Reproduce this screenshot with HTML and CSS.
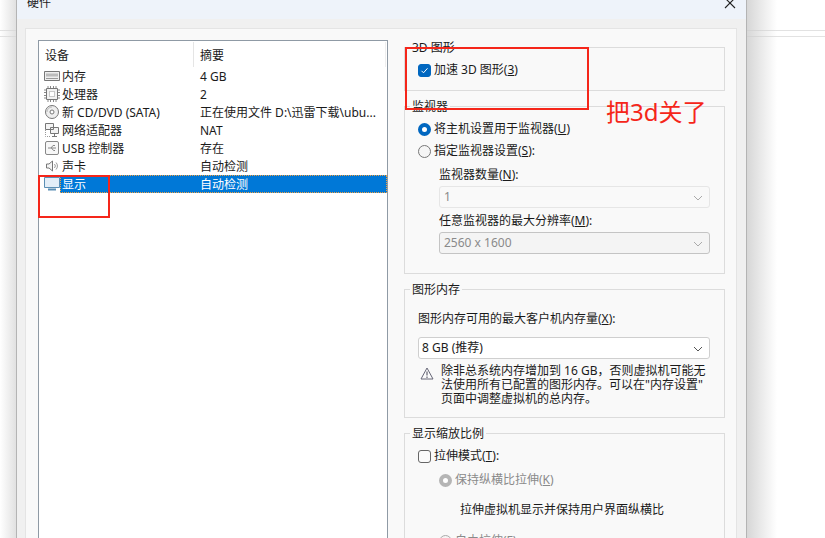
FILE: index.html
```html
<!DOCTYPE html>
<html lang="zh-CN">
<head>
<meta charset="utf-8">
<title>硬件</title>
<link rel="stylesheet" href="styles.css">
</head>
<body>
<div class="desktop">
  <div class="bg-line line-a"></div>
  <div class="bg-line line-b"></div>
  <div class="shade-left"></div>
  <div class="shade-right"></div>

  <section class="dialog">
    <header class="titlebar">
      <span class="title">硬件</span>
      <svg class="close" width="12" height="12" viewBox="0 0 12 12"><path d="M1 1l10 10M11 1L1 11" stroke="#222" stroke-width="1.1" fill="none"/></svg>
    </header>
    <div class="panel">
      <div class="devices">
        <div class="head">
          <span class="h-dev">设备</span>
          <span class="h-sum">摘要</span>
        </div>
        <div class="row">
          <svg class="ico" width="16" height="16" viewBox="0 0 16 16"><path d="M.5 3.500h15v9H.5z" fill="#eee" stroke="#777"/><path d="M2 5.500h12v3H2z" fill="#bbb"/><path d="M2 10.500h12" stroke="#999"/></svg>
          <span class="name">内存</span><span class="sum">4 GB</span>
        </div>
        <div class="row">
          <svg class="ico" width="16" height="16" viewBox="0 0 16 16"><path d="M2.500 2.500h11v11h-11z" fill="#f2f2f2" stroke="#777"/><path d="M5.500 5.500h5v5h-5z" fill="#fff" stroke="#999" stroke-dasharray="1 1"/><path d="M4 0v2M6.500 0v2M9.500 0v2M12 0v2M4 14v2M6.500 14v2M9.500 14v2M12 14v2M0 4h2M0 6.500h2M0 9.500h2M0 12h2M14 4h2M14 6.500h2M14 9.500h2M14 12h2" stroke="#888"/></svg>
          <span class="name">处理器</span><span class="sum">2</span>
        </div>
        <div class="row">
          <svg class="ico" width="16" height="16" viewBox="0 0 16 16"><circle cx="8" cy="8" r="6.500" fill="#eee" stroke="#777"/><circle cx="8" cy="8" r="2" fill="#fff" stroke="#777"/><path d="M8 3a5 5 0 0 0-5 5" stroke="#bbb" fill="none"/></svg>
          <span class="name">新 CD/DVD (SATA)</span><span class="sum">正在使用文件 D:\迅雷下载\ubu...</span>
        </div>
        <div class="row">
          <svg class="ico" width="16" height="16" viewBox="0 0 16 16"><path d="M1.500 1.500h8v6h-8zM6.500 5.500h8v6h-8z" fill="#f4f4f4" stroke="#777"/><path d="M10.500 11.500v3M8 14.500h5" stroke="#777"/><path d="M1.500 8v6.500h5" stroke="#999" stroke-dasharray="1 1" fill="none"/></svg>
          <span class="name">网络适配器</span><span class="sum">NAT</span>
        </div>
        <div class="row">
          <svg class="ico" width="16" height="16" viewBox="0 0 16 16"><rect x="1.500" y="1.500" width="13" height="13" rx="1.500" fill="#f7f7f7" stroke="#888"/><path d="M4 8h8M7 8l2-2.500h2M7.500 8l2 2.500h1.500" stroke="#888" fill="none"/></svg>
          <span class="name">USB 控制器</span><span class="sum">存在</span>
        </div>
        <div class="row">
          <svg class="ico" width="16" height="16" viewBox="0 0 16 16"><path d="M2.500 6v4h2.500l3.500 3V3L5 6z" fill="#f4f4f4" stroke="#777"/><path d="M10.500 6a3 3 0 0 1 0 4M12 4.500a5 5 0 0 1 0 7" stroke="#999" fill="none"/></svg>
          <span class="name">声卡</span><span class="sum">自动检测</span>
        </div>
        <div class="row selected">
          <svg class="ico" width="16" height="16" viewBox="0 0 16 16"><path d="M.5 1.500h15v10H.5z" fill="#e3eef8" stroke="#5b8fb5"/><path d="M4 13.500h8" stroke="#5b8fb5" stroke-width="2"/></svg>
          <span class="cell"><span class="name">显示</span><span class="sum">自动检测</span></span>
        </div>
      </div>

      <div class="settings">
        <fieldset class="group g-3d">
          <legend>3D 图形</legend>
          <label class="opt"><span class="check on"><svg width="9" height="9" viewBox="0 0 9 9"><path d="M1.500 4.800l2 2 4-4.500" stroke="#fff" fill="none"/></svg></span>加速 3D 图形(<u>3</u>)</label>
        </fieldset>

        <fieldset class="group g-mon">
          <legend>监视器</legend>
          <label class="opt"><span class="radio on"></span>将主机设置用于监视器(<u>U</u>)</label>
          <label class="opt opt-second"><span class="radio"></span>指定监视器设置(<u>S</u>):</label>
          <div class="sub">
            <div class="lbl">监视器数量(<u>N</u>):</div>
            <div class="select off flat">1<svg class="chev" width="10" height="6" viewBox="0 0 10 6"><path d="M1 1l4 4 4-4" stroke="#aaa" fill="none"/></svg></div>
            <div class="lbl lbl-res">任意监视器的最大分辨率(<u>M</u>):</div>
            <div class="select off">2560 x 1600<svg class="chev" width="10" height="6" viewBox="0 0 10 6"><path d="M1 1l4 4 4-4" stroke="#aaa" fill="none"/></svg></div>
          </div>
        </fieldset>

        <fieldset class="group g-mem">
          <legend>图形内存</legend>
          <div class="lbl">图形内存可用的最大客户机内存量(<u>X</u>):</div>
          <div class="select live">8 GB (推荐)<svg class="chev" width="10" height="6" viewBox="0 0 10 6"><path d="M1 1l4 4 4-4" stroke="#555" fill="none"/></svg></div>
          <div class="warn">
            <svg width="14" height="13" viewBox="0 0 14 13"><path d="M7 1L1 12h12z" fill="#fbfbfb" stroke="#667"/><path d="M7 4.500v4M7 9.500v1.500" stroke="#445"/></svg>
            <p>除非总系统内存增加到 16 GB，否则虚拟机可能无<br>法使用所有已配置的图形内存。可以在"内存设置"<br>页面中调整虚拟机的总内存。</p>
          </div>
        </fieldset>

        <fieldset class="group g-scale">
          <legend>显示缩放比例</legend>
          <label class="opt"><span class="check"></span>拉伸模式(<u>T</u>):</label>
          <div class="sub-scale">
            <label class="opt dim"><span class="radio disabled"></span>保持纵横比拉伸(<u>K</u>)</label>
            <p class="desc">拉伸虚拟机显示并保持用户界面纵横比</p>
            <label class="opt dim"><span class="radio blank"></span>自由拉伸(<u>F</u>)</label>
          </div>
        </fieldset>
      </div>
    </div>
  </section>

  <div class="mark mark-a"></div>
  <div class="mark mark-b"></div>
  <div class="note">把3d关了</div>
</div>
</body>
</html>
```

FILE: styles.css
```css
* { box-sizing: border-box; }
html, body { margin: 0; padding: 0; background: #fff; }
body { font: 12px/16px "Noto Sans", "Noto Sans CJK SC", sans-serif; color: #1a1a1a; }
u { text-underline-offset: 1px; }
p { margin: 0; }

.desktop { position: relative; width: 825px; height: 538px; overflow: hidden; background: #fff; }
.bg-line { position: absolute; left: 0; right: 0; height: 1px; background: #e2e2e2; }
.line-a { top: 30px; }
.line-b { top: 36px; }
.shade-left { position: absolute; left: 0; top: 0; bottom: 0; width: 17px; background: linear-gradient(to right, rgba(250,250,250,0), rgba(215,215,215,.8)); }
.shade-right { position: absolute; left: 747px; top: 0; bottom: 0; width: 30px; background: linear-gradient(to right, rgba(205,205,205,.8), rgba(255,255,255,0)); }

.dialog { position: absolute; left: 16px; top: -11px; width: 731px; height: 620px; background: #f0f0f0; border-left: 1px solid #b4b4b4; border-right: 1px solid #b4b4b4; }
.titlebar { height: 30px; background: #eef3fa; display: flex; justify-content: space-between; align-items: flex-start; padding: 5px 10px 0 10px; }
.title { font-size: 12px; line-height: 18px; color: #222; }
.close { margin-top: 3px; }

.panel { margin: 9px 9px 0 8px; height: 600px; background: #f9f9f9; border: 1px solid #e4e4e4; display: flex; padding: 11px 12px 0 12px; }

.devices { width: 350px; height: 580px; padding-top: 1px; background: #fff; border: 1px solid #8f9aa5; flex: none; }
.head { height: 25px; display: flex; align-items: flex-start; }
.h-dev { width: 155px; height: 25px; padding-left: 6px; border-right: 1px solid #e5e5e5; line-height: 27px; }
.h-sum { flex: 1; height: 25px; margin-right: 1px; padding-left: 6px; border-right: 1px solid #eeeeee; line-height: 27px; }
.row { height: 18px; display: flex; align-items: flex-start; padding-left: 5px; line-height: 20px; white-space: nowrap; }
.ico { flex: none; width: 16px; height: 16px; margin-top: 1px; margin-right: 2px; }
.name { width: 138px; flex: none; }
.sum { flex: none; }
.selected { color: #fff; }
.cell { display: flex; flex: 1; margin-left: -2px; background: #0078d7; outline: 1px dotted #f0a040; outline-offset: -1px; height: 18px; }
.cell .name { width: 140px; padding-left: 2px; }

.settings { margin-left: 16px; width: 321px; flex: none; }
.group { margin: 0 0 6px 0; padding: 0 14px 0 13px; border: 1px solid #dcdcdc; min-width: 0; }
.group legend { padding: 2px 2px 0; margin-left: -8px; line-height: 16px; }
.g-3d { height: 53px; padding-top: 5px; margin-top: -2px; }
.g-mon { height: 177px; padding-top: 5px; }
.g-mem { height: 138px; }
.g-scale { height: 200px; padding-top: 5px; }

.opt { display: flex; align-items: center; height: 18px; line-height: 18px; white-space: nowrap; }
.opt-second { margin-top: 4px; }
.check { width: 13px; height: 13px; margin-right: 3px; border: 1px solid #666; border-radius: 3px; background: #fbfbfb; display: flex; align-items: center; justify-content: center; flex: none; }
.check.on { background: #0067c0; border-color: #0067c0; }
.radio { width: 13px; height: 13px; margin-right: 3px; border: 1px solid #777; border-radius: 50%; background: #f5f5f5; flex: none; }
.radio.on { border: 4px solid #0067c0; background: #fff; }
.radio.disabled { border: 4px solid #b5b5b5; background: #fff; }
.radio.blank { border-color: #aaa; }

.sub { margin-left: 21px; margin-top: 7px; }
.lbl { line-height: 16px; white-space: nowrap; }
.lbl-res { margin-top: 5px; }
.select { position: relative; height: 22px; margin-top: 3px; border: 1px solid #d5d5d5; border-radius: 3px; padding-left: 4px; line-height: 20px; }
.select.off { color: #8a8a8a; background: #f4f4f4; border-color: #c4c4c4; }
.select.flat { background: #f9f9f9; border-color: #e6e6e6; }
.select.live { background: #fff; margin-top: 10px; padding-left: 3px; color: #1a1a1a; border-color: #cfcfcf; }
.chev { position: absolute; right: 6px; top: 8px; }

.g-mem .lbl { margin-top: 13px; }
.warn { display: flex; gap: 7px; margin-top: 5px; padding-left: 2px; }
.warn svg { flex: none; margin-top: 3px; }
.warn p { white-space: nowrap; line-height: 14px; }

.sub-scale { margin-left: 21px; margin-top: 6px; }
.dim { color: #8a8a8a; }
.desc { margin: 13px 0 14px 21px; white-space: nowrap; }

.mark { position: absolute; border: 2px solid #f5261a; }
.mark-a { left: 38px; top: 175px; width: 72px; height: 43px; }
.mark-b { left: 405px; top: 47px; width: 184px; height: 63px; }
.note { position: absolute; left: 606px; top: 95px; font-size: 24px; line-height: 34px; color: #f5261a; white-space: nowrap; }
```
